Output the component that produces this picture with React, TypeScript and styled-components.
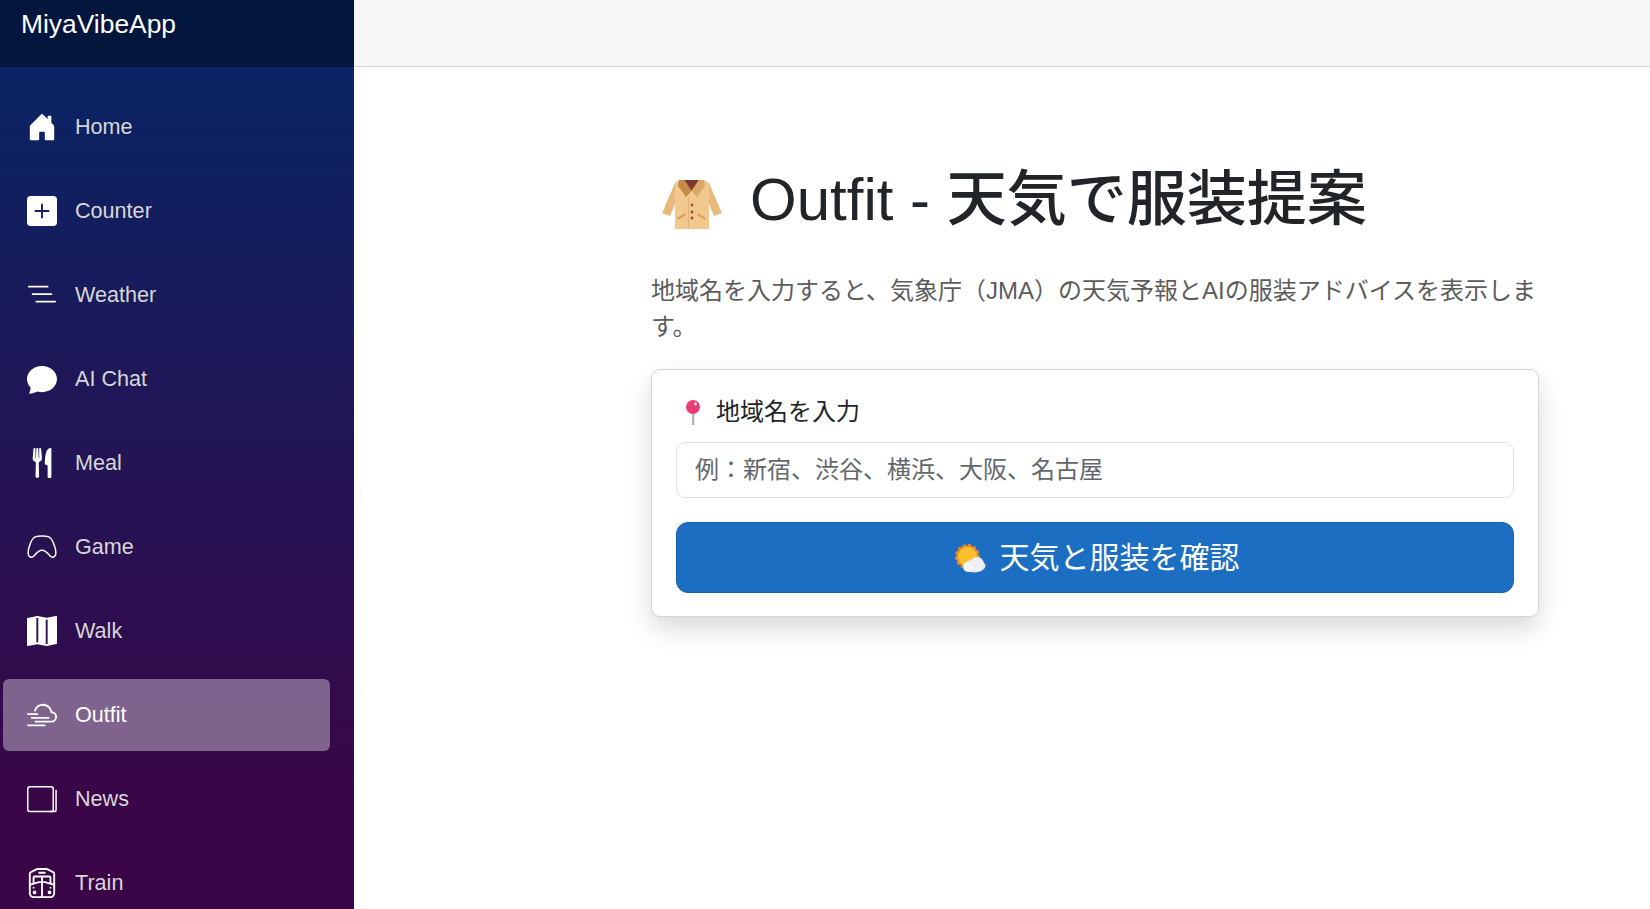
import React, { FC, ReactNode } from 'react';
import styled, { createGlobalStyle } from 'styled-components';
import {
  BsHouseDoorFill,
  BsPlusSquareFill,
  BsListNested,
  BsChatFill,
  BsMapFill,
  BsCloudHaze2,
  BsTrainFreightFront,
} from 'react-icons/bs';

const FONT = `"Liberation Sans", "Noto Sans CJK JP", sans-serif`;

const GlobalStyle = createGlobalStyle`
  html, body {
    margin: 0;
    padding: 0;
    height: 100%;
    overflow: hidden;
    background: #fff;
    font-family: ${FONT};
  }
  * { box-sizing: border-box; }
`;

const Page = styled.div`
  display: flex;
  height: 909px;
`;

const Sidebar = styled.aside`
  width: 354px;
  flex: none;
  overflow: hidden;
  background-image: linear-gradient(180deg, #052767 0, #3a0647 810px);
`;

const Brand = styled.div`
  height: 67px;
  padding: 9px 0 0 21px;
  background: rgba(0, 0, 0, 0.4);
  color: #fff;
  font-size: 26.4px;
  line-height: 30px;
`;

const Nav = styled.nav`
  display: flex;
  flex-direction: column;
  gap: 12px;
  padding: 24px 24px 0 3px;
`;

const NavLink = styled.a<{ $active?: boolean }>`
  display: flex;
  align-items: center;
  gap: 18px;
  height: 72px;
  padding-left: 24px;
  border-radius: 6px;
  font-size: 21.6px;
  color: ${(p) => (p.$active ? '#fff' : '#d7d7d7')};
  background: ${(p) => (p.$active ? 'rgba(255, 255, 255, 0.37)' : 'transparent')};

  svg {
    width: 30px;
    height: 30px;
    flex: none;
    color: #fff;
  }
`;

const Main = styled.main`
  flex: 1;
  min-width: 0;
`;

const TopBar = styled.header`
  height: 67px;
  background: #f7f7f7;
  border-bottom: 1px solid #d6d5d5;
`;

const Content = styled.div`
  padding: 97px 111px 0 297px;
`;

const Title = styled.h1`
  display: flex;
  align-items: center;
  gap: 17px;
  margin: 0 0 37px;
  font-size: 60px;
  line-height: 72px;
  font-weight: 500;
  color: #212529;
`;

const CoatBox = styled.span`
  display: flex;
  justify-content: center;
  width: 82px;
  padding-top: 9px;
  flex: none;
`;

const Lead = styled.p`
  margin: 0 0 24px;
  font-size: 24px;
  line-height: 36px;
  color: #5c5c5c;
`;

const Card = styled.section`
  padding: 24px 24px 23px;
  background: #fff;
  border: 1px solid #d5d5d5;
  border-radius: 9px;
  box-shadow: 0 12px 24px rgba(0, 0, 0, 0.15);
`;

const Label = styled.label`
  display: flex;
  align-items: center;
  gap: 7px;
  margin-bottom: 12px;
  font-size: 24px;
  line-height: 36px;
  color: #212529;
`;

const PinBox = styled.span`
  display: flex;
  justify-content: center;
  width: 33px;
  flex: none;
`;

const Input = styled.input`
  display: block;
  width: 100%;
  height: 56px;
  margin-bottom: 24px;
  padding: 0 18px;
  border: 1px solid #dee2e6;
  border-radius: 9px;
  background: #fff;
  font-family: ${FONT};
  font-size: 24px;
  outline: none;

  &::placeholder {
    color: #62676c;
    opacity: 1;
  }
`;

const Button = styled.button`
  display: flex;
  align-items: center;
  justify-content: center;
  gap: 14px;
  width: 100%;
  height: 71px;
  padding: 0 0 6px 4px;
  border: 1px solid #1861ac;
  border-radius: 12px;
  background: #1b6ec2;
  color: #fff;
  font-family: ${FONT};
  font-size: 30px;

  svg {
    margin-top: 8px;
  }
`;

/* emoji drawings: no colour emoji font is installed */
const CoatIcon: FC = () => (
  <svg width="60" height="50" viewBox="0 0 60 50" aria-hidden="true">
    <path d="M13 3 L0 33 L8 36 L14 22 Z" fill="#e9b97c" />
    <path d="M47 3 L60 33 L52 36 L46 22 Z" fill="#e9b97c" />
    <path d="M13 3 L17 0 H42 L47 3 V49 H13 Z" fill="#f3c88f" />
    <path d="M26 17 H27 V49 H26 Z" fill="#e3b274" />
    <path d="M22 0 H37 L29.5 11 Z" fill="#7c3b2e" />
    <path d="M17 0 H22 L29.5 11 L24 17 L16 6 Z" fill="#c58b46" />
    <path d="M42 0 H37 L29.5 11 L35 17 L43 6 Z" fill="#d9a865" />
    <path d="M15 38 L23 33 L24 35 L16 40 Z" fill="#d89e5b" />
    <path d="M36 33 L44 38 L43 40 L35 35 Z" fill="#d89e5b" />
    <circle cx="30" cy="25" r="1.4" fill="#8d4f3f" />
    <circle cx="30" cy="32" r="1.4" fill="#8d4f3f" />
    <circle cx="30" cy="38" r="1.4" fill="#8d4f3f" />
  </svg>
);

const PinIcon: FC = () => (
  <svg width="14" height="25" viewBox="0 0 14 25" aria-hidden="true">
    <rect x="6" y="12" width="2.4" height="13" fill="#b4b4bc" />
    <circle cx="7" cy="7" r="7" fill="#ea3f75" />
    <circle cx="9.5" cy="3.8" r="1.6" fill="#f7c5d3" />
  </svg>
);

const SunCloudIcon: FC = () => (
  <svg width="31" height="29" viewBox="0 0 31 29" aria-hidden="true">
    <circle cx="12.5" cy="12.5" r="11" fill="#f58c23" stroke="#f58c23" strokeWidth="3" strokeDasharray="3 2.2" />
    <circle cx="12.5" cy="12.5" r="9.5" fill="#fbc02d" />
    <ellipse cx="19.5" cy="22" rx="11" ry="6.5" fill="#e3e6ea" />
    <circle cx="22" cy="20" r="7" fill="#eef0f3" />
    <circle cx="13" cy="23" r="5" fill="#f4f5f7" />
  </svg>
);

/* no matching glyph in the icon set for these */
const NewsIcon: FC = () => (
  <svg viewBox="0 0 16 16" fill="none" stroke="currentColor" strokeWidth="0.8" aria-hidden="true">
    <rect x="0.4" y="1.4" width="13.6" height="13.2" rx="1.2" />
    <path d="M15.5 3v10.8a0.8 0.8 0 0 1-0.8 0.8H12" />
  </svg>
);

const ForkKnifeIcon: FC = () => (
  <svg viewBox="0 0 16 16" fill="currentColor" aria-hidden="true">
    <path d="M13 .5c0-.276-.226-.506-.498-.465-1.703.257-2.94 2.012-3 8.462a.5.5 0 0 0 .498.5c.56.01 1 .13 1 1.003v5.5a.5.5 0 0 0 .5.5h1a.5.5 0 0 0 .5-.5zM4.25 0a.25.25 0 0 1 .25.25v5.122a.128.128 0 0 0 .256.006l.233-5.14A.25.25 0 0 1 5.24 0h.522a.25.25 0 0 1 .25.238l.233 5.14a.128.128 0 0 0 .256-.006V.25A.25.25 0 0 1 6.75 0h.29a.5.5 0 0 1 .498.458l.423 5.07a1.69 1.69 0 0 1-1.059 1.711l-.053.022a.92.92 0 0 0-.58.884L6.47 15a.971.971 0 1 1-1.942 0l.202-6.855a.92.92 0 0 0-.58-.884l-.053-.022a1.69 1.69 0 0 1-1.059-1.712L3.462.458A.5.5 0 0 1 3.96 0z" />
  </svg>
);

const GameIcon: FC = () => (
  <svg viewBox="0 0 16 16" fill="none" stroke="currentColor" strokeWidth="0.8" aria-hidden="true">
    <path d="M4.4 2.6C6 2 10 2 11.6 2.6C13.3 3.2 15.5 8 15.4 11.5C15.3 13.5 13.5 13.9 12.3 12.8C11 11.3 10 9.7 8 9.7C6 9.7 5 11.3 3.7 12.8C2.5 13.9 .7 13.5 .6 11.5C.5 8 2.7 3.2 4.4 2.6Z" />
  </svg>
);

interface Item {
  label: string;
  icon: ReactNode;
  active?: boolean;
}

const items: Item[] = [
  { label: 'Home', icon: <BsHouseDoorFill /> },
  { label: 'Counter', icon: <BsPlusSquareFill /> },
  { label: 'Weather', icon: <BsListNested /> },
  { label: 'AI Chat', icon: <BsChatFill /> },
  { label: 'Meal', icon: <ForkKnifeIcon /> },
  { label: 'Game', icon: <GameIcon /> },
  { label: 'Walk', icon: <BsMapFill /> },
  { label: 'Outfit', icon: <BsCloudHaze2 />, active: true },
  { label: 'News', icon: <NewsIcon /> },
  { label: 'Train', icon: <BsTrainFreightFront /> },
];

const App: FC = () => (
  <>
    <GlobalStyle />
    <Page>
      <Sidebar>
        <Brand>MiyaVibeApp</Brand>
        <Nav>
          {items.map((item) => (
            <NavLink key={item.label} $active={item.active}>
              {item.icon}
              {item.label}
            </NavLink>
          ))}
        </Nav>
      </Sidebar>
      <Main>
        <TopBar />
        <Content>
          <Title>
            <CoatBox>
              <CoatIcon />
            </CoatBox>
            Outfit - 天気で服装提案
          </Title>
          <Lead>地域名を入力すると、気象庁（JMA）の天気予報とAIの服装アドバイスを表示します。</Lead>
          <Card>
            <Label>
              <PinBox>
                <PinIcon />
              </PinBox>
              地域名を入力
            </Label>
            <Input placeholder="例：新宿、渋谷、横浜、大阪、名古屋" />
            <Button>
              <SunCloudIcon />
              天気と服装を確認
            </Button>
          </Card>
        </Content>
      </Main>
    </Page>
  </>
);

export default App;
